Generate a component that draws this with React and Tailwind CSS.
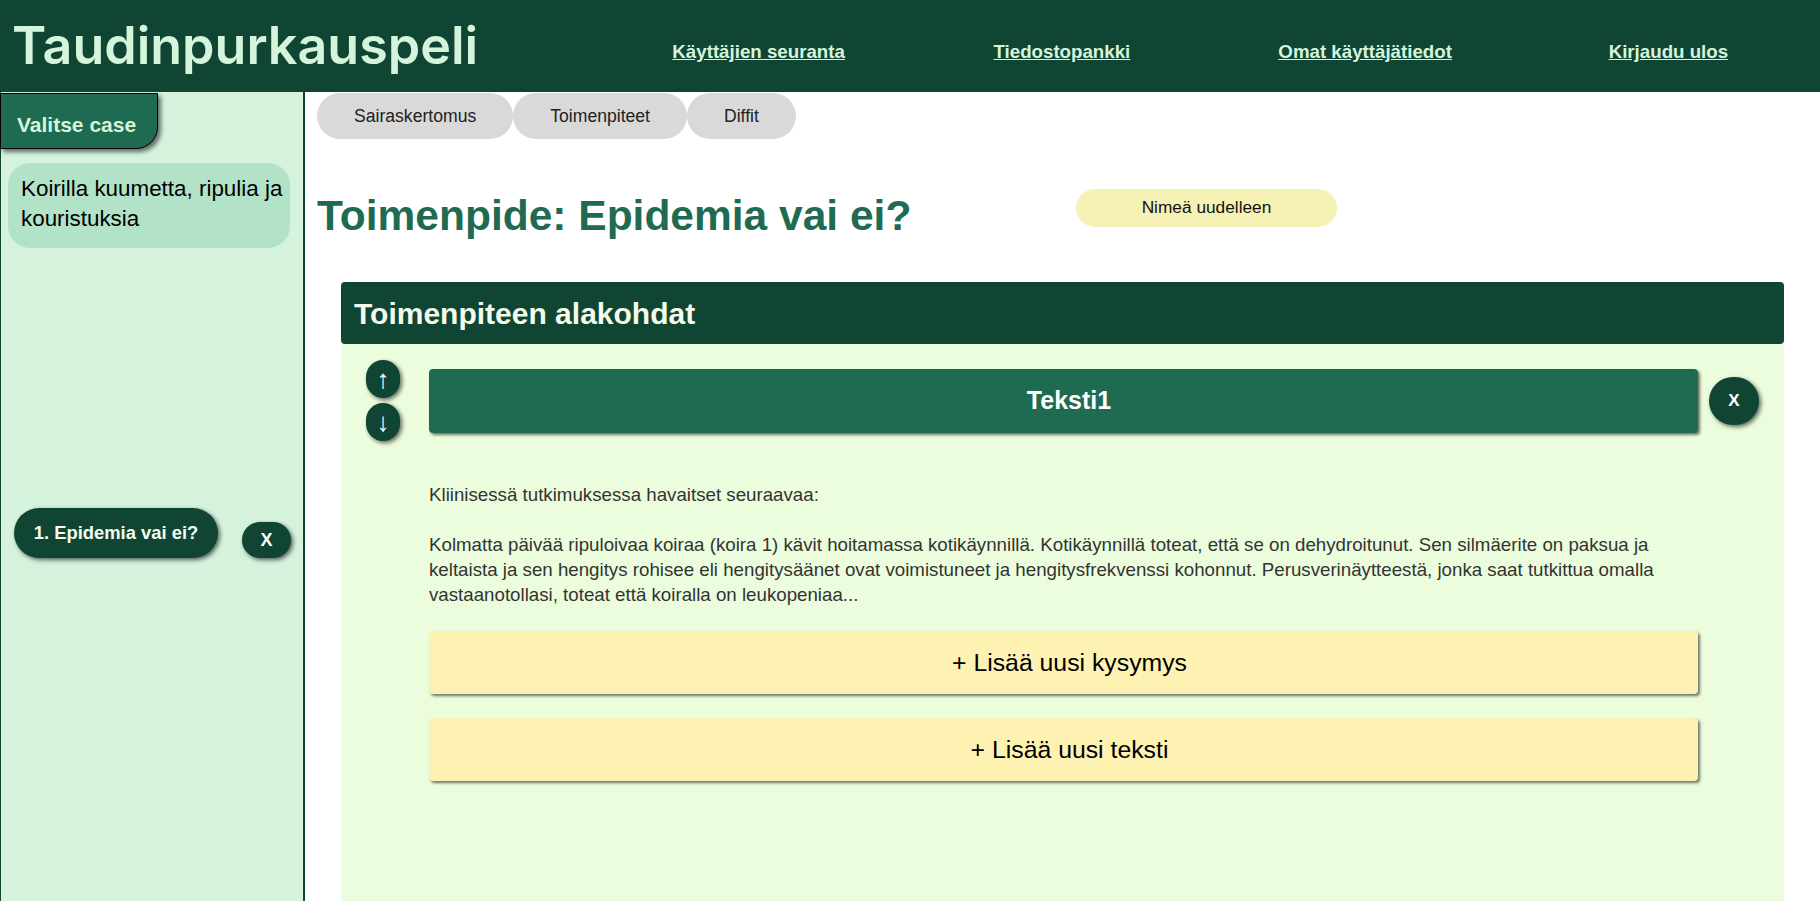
import React from 'react';

const navLinks = ['Käyttäjien seuranta', 'Tiedostopankki', 'Omat käyttäjätiedot', 'Kirjaudu ulos'];
const tabs = ['Sairaskertomus', 'Toimenpiteet', 'Diffit'];

const kuvaus = `Kliinisessä tutkimuksessa havaitset seuraavaa:

Kolmatta päivää ripuloivaa koiraa (koira 1) kävit hoitamassa kotikäynnillä. Kotikäynnillä toteat, että se on dehydroitunut. Sen silmäerite on paksua ja keltaista ja sen hengitys rohisee eli hengitysäänet ovat voimistuneet ja hengitysfrekvenssi kohonnut. Perusverinäytteestä, jonka saat tutkittua omalla vastaanotollasi, toteat että koiralla on leukopeniaa...`;

const Header = () => (
  <header className="h-[92px] shrink-0 bg-[#114533] flex items-center">
    <div className="w-[607px] shrink-0 pl-[12px] font-['Inter',sans-serif] font-semibold text-[52px] leading-none text-[#d4f5dc]">
      Taudinpurkauspeli
    </div>
    <nav className="flex-1 grid grid-cols-4 pt-[12px]">
      {navLinks.map((link) => (
        <div key={link} className="text-center">
          <a href="#" className="text-[18.72px] font-bold underline text-[#d4f5dc]">
            {link}
          </a>
        </div>
      ))}
    </nav>
  </header>
);

const Sidebar = () => (
  <aside className="w-[305px] shrink-0 bg-[#d4f2dc] border-l border-r-2 border-[#114533] flex flex-col">
    <div className="w-[158px] h-[56px] mt-px -ml-px flex items-center pl-[16px] pt-[7px] bg-[#1f6b52] border border-black rounded-br-[22px] shadow-[3px_3px_4px_rgba(0,0,0,0.55)] text-[21px] font-bold text-[#d4f5dc]">
      Valitse case
    </div>
    <div className="mt-[14px] ml-[7px] mr-[13px] bg-[#b2e3c8] rounded-[22px] pl-[13px] pt-[11px] pb-[14px] text-[22.4px] leading-[30px] text-black">
      Koirilla kuumetta, ripulia ja kouristuksia
    </div>
    <div className="mt-[260px] ml-[13px] flex items-end gap-[24px]">
      <button className="w-[204px] h-[50px] rounded-full bg-[#114533] text-[18.4px] font-bold text-[#f4fbef] shadow-[2px_2px_4px_rgba(0,0,0,0.6)]">
        1. Epidemia vai ei?
      </button>
      <button className="w-[49px] h-[36px] rounded-full bg-[#114533] text-[18px] font-bold text-white shadow-[2px_2px_4px_rgba(0,0,0,0.6)]">
        X
      </button>
    </div>
  </aside>
);

const Toimenpide = () => (
  <section className="ml-[24px] mr-[36px] mt-[42px] flex-1 flex flex-col">
    <div className="h-[62px] bg-[#114533] rounded-[4px] flex items-center pl-[13px] text-[30px] font-bold text-[#f3fbea]">
      Toimenpiteen alakohdat
    </div>
    <div className="flex-1 bg-[#ebfddd] pt-[16px] pl-[25px] pr-[25px]">
      <div className="flex items-center">
        <div className="w-[34px] flex flex-col gap-[5px]">
          <button className="h-[38px] rounded-full bg-[#114533] text-white text-[26px] leading-none shadow-[2px_2px_4px_rgba(0,0,0,0.6)]">
            ↑
          </button>
          <button className="h-[38px] rounded-full bg-[#114533] text-white text-[26px] leading-none shadow-[2px_2px_4px_rgba(0,0,0,0.6)]">
            ↓
          </button>
        </div>
        <div className="ml-[29px] flex-1 h-[64px] pl-[11px] bg-[#1f6b52] rounded-[4px] shadow-[2px_2px_3px_rgba(0,0,0,0.55)] flex items-center justify-center text-[25px] font-bold text-white">
          Teksti1
        </div>
        <button className="ml-[11px] w-[50px] h-[48px] rounded-full bg-[#114533] text-white text-[17px] font-bold shadow-[2px_2px_4px_rgba(0,0,0,0.6)]">
          X
        </button>
      </div>
      <div className="ml-[63px] mr-[61px]">
        <p className="mt-[41px] whitespace-pre-line text-[18.72px] leading-[25px] text-[#333333]">
          {kuvaus}
        </p>
        <button className="mt-[24px] w-full h-[63px] pl-[12px] bg-[#fef2b3] rounded-[4px] shadow-[2px_2px_3px_rgba(0,0,0,0.55)] text-[24.8px] text-black">
          + Lisää uusi kysymys
        </button>
        <button className="mt-[24px] w-full h-[63px] pl-[12px] bg-[#fef2b3] rounded-[4px] shadow-[2px_2px_3px_rgba(0,0,0,0.55)] text-[24.8px] text-black">
          + Lisää uusi teksti
        </button>
      </div>
    </div>
  </section>
);

export default function App() {
  return (
    <div className="h-screen flex flex-col overflow-hidden bg-white font-['Liberation_Sans',Arial,sans-serif]">
      <Header />
      <div className="flex flex-1 min-h-0">
        <Sidebar />
        <main className="flex-1 flex flex-col pl-[12px]">
          <div className="mt-px flex">
            {tabs.map((tab) => (
              <button
                key={tab}
                className="h-[46px] px-[37px] rounded-full bg-[#d9d9d9] text-[17.6px] text-[#222222]"
              >
                {tab}
              </button>
            ))}
          </div>
          <div className="mt-[50px] flex items-start">
            <h1 className="w-[759px] shrink-0 mt-[3px] text-[42.5px] leading-[48px] font-bold text-[#1f6b52]">
              Toimenpide: Epidemia vai ei?
            </h1>
            <button className="w-[261px] h-[38px] rounded-full bg-[#f6f2b5] text-[17.3px] text-[#111111]">
              Nimeä uudelleen
            </button>
          </div>
          <Toimenpide />
        </main>
      </div>
    </div>
  );
}
